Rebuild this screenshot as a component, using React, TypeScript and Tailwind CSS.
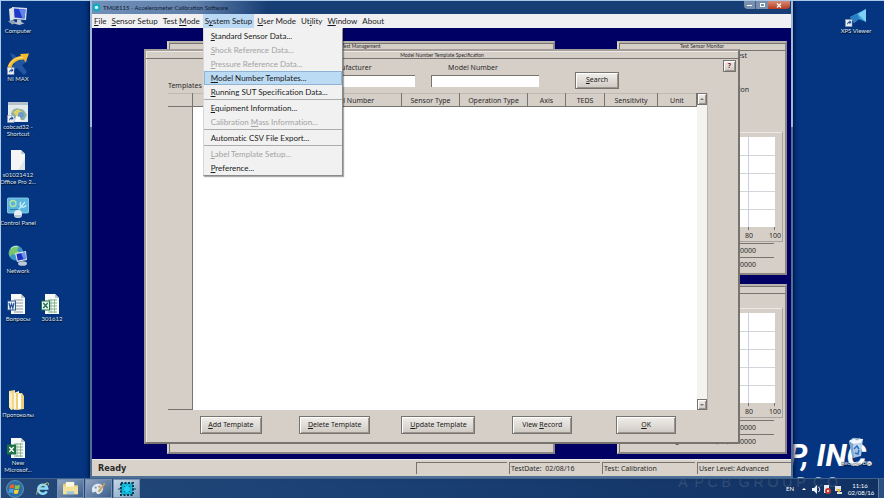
import { ReactNode } from 'react';
import clsx from 'clsx';

type MenuEntry = { label: string; key: number; disabled?: boolean; active?: boolean; divider?: boolean };

const menus = [
  { label: 'File', key: 0 },
  { label: 'Sensor Setup', key: 0 },
  { label: 'Test Mode', key: 5 },
  { label: 'System Setup', key: 1 },
  { label: 'User Mode', key: 0 },
  { label: 'Utility', key: 2 },
  { label: 'Window', key: 0 },
  { label: 'About', key: -1 },
];

const systemSetup: MenuEntry[] = [
  { label: 'Standard Sensor Data...', key: 0 },
  { label: 'Shock Reference Data...', key: 0, disabled: true },
  { label: 'Pressure Reference Data...', key: 0, disabled: true },
  { label: 'Model Number Templates...', key: 0, active: true },
  { label: 'Running SUT Specification Data...', key: 0 },
  { label: 'Equipment Information...', key: 0, divider: true },
  { label: 'Calibration Mass Information...', key: 12, disabled: true },
  { label: 'Automatic CSV File Export...', key: -1, divider: true },
  { label: 'Label Template Setup...', key: 0, disabled: true, divider: true },
  { label: 'Preference...', key: 0 },
];

const columns = [
  { label: 'Manufacturer', width: 'w-[105px]' },
  { label: 'Model Number', width: 'w-auto' },
  { label: 'Sensor Type', width: 'w-[58px]' },
  { label: 'Operation Type', width: 'w-[68px]' },
  { label: 'Axis', width: 'w-[38px]' },
  { label: 'TEDS', width: 'w-[39px]' },
  { label: 'Sensitivity', width: 'w-[53px]' },
  { label: 'Unit', width: 'w-[39px]' },
];

const actions = [
  { label: 'Add Template', key: 0, width: 'w-[62px]' },
  { label: 'Delete Template', key: 0, width: 'w-[71px]' },
  { label: 'Update Template', key: 0, width: 'w-[74px]' },
  { label: 'View Record', key: 5, width: 'w-[60px]' },
  { label: 'OK', key: 0, width: 'w-[60px]' },
];

const Hotkey = ({ text, at }: { text: string; at: number }) => {
  if (at < 0) return <>{text}</>;
  return (
    <>
      {text.slice(0, at)}
      <u className="underline-offset-1">{text[at]}</u>
      {text.slice(at + 1)}
    </>
  );
};

/* ---------- icons ---------- */

const ComputerIcon = () => (
  <svg viewBox="0 0 22 22" className="size-[22px]">
    <path d="M2 4l5-2 1 12-5 2z" fill="#dce4ea" />
    <path d="M5 2l15 1-1 12-13-1z" fill="#d6dde3" />
    <path d="M7 3.500l11.500 1-1 9-10-1z" fill="#2038c8" />
    <path d="M12 4l6.500.500-1 9-2-.200z" fill="#5f86f0" />
    <path d="M10 14.500l4 .300.500 2.500 3 1-5 1.700-6-1.500 3.500-1.500z" fill="#b9c6d2" />
    <path d="M1 16l5-1 4 3-5 1.500z" fill="#8fa3b7" />
  </svg>
);

const ShortcutArrow = () => (
  <g>
    <rect x="0.500" y="14.500" width="6.500" height="7" fill="#eef2f6" stroke="#8899aa" strokeWidth=".5" />
    <path d="M2 20c0-2.500 1-3.500 2.500-3.600V15l2 2.300-2 2.200V18c-1.300 0-1.800.800-2.500 2z" fill="#214f9c" />
  </g>
);

const NiMaxIcon = () => (
  <svg viewBox="0 0 22 22" className="size-[22px]">
    <path d="M3 0l5 2 4 6 5-5 4 5-6 4 5 7-3 3-7-7-6 4-1-4 5-4z" fill="#2456a0" />
    <path d="M0 17C1 9 6 4 14 3l-1-2 9-.5-3.500 9-1.500-3c-7 0-11 3-13 9z" fill="#f4b92c" />
    <path d="M2 13C4 8 8 5 16 4.300" fill="none" stroke="#fde58c" strokeWidth="1" />
    <ShortcutArrow />
  </svg>
);

const CobcadIcon = () => (
  <svg viewBox="0 0 22 22" className="size-[22px]">
    <rect x="1" y="1" width="20" height="20" fill="#e4e9ec" />
    <rect x="1" y="1" width="20" height="3" fill="#b6c2cb" />
    <path d="M4 13c1-5 5-7 9-5 4 0 5 3 7 6l-3 5H9z" fill="#8fb0a5" />
    <path d="M6 11l5-3 4 3-5 5z" fill="#dcd36a" />
    <circle cx="14" cy="14" r="3" fill="#6b9cc9" />
    <path d="M9 15l4 1 1 4H8z" fill="#fafafa" />
    <ShortcutArrow />
  </svg>
);

const FileIcon = () => (
  <svg viewBox="0 0 22 22" className="size-[22px]">
    <path d="M4 1h10l4 4v16H4z" fill="#f3f5f6" />
    <path d="M14 1v4h4z" fill="#c3cbd1" />
    <path d="M11 21l7-11v11z" fill="#dde3e7" />
  </svg>
);

const ControlPanelIcon = () => (
  <svg viewBox="0 0 22 22" className="size-[22px]">
    <rect x="0.500" y="1" width="21" height="15" rx="1" fill="#5cb5dc" stroke="#9bd8ee" strokeWidth=".8" />
    <circle cx="6" cy="6.500" r="3" fill="none" stroke="#b5e3a1" strokeWidth="1.300" />
    <path d="M12 12l6-7M14 5a3 3 0 1 0 5 3" stroke="#c5effa" strokeWidth="1.300" fill="none" />
    <path d="M3 12.500h8" stroke="#2f7fb2" />
    <circle cx="11" cy="17" r="4" fill="#e8eff4" />
    <path d="M7 18a4 3 0 0 0 8 0z" fill="#b8c8d4" />
  </svg>
);

const NetworkIcon = () => (
  <svg viewBox="0 0 22 22" className="size-[22px]">
    <circle cx="9" cy="8" r="7.500" fill="#3b94c8" />
    <path d="M3 5c2-4 7-4 9-3l-2 3 2 2-4 3-3-1-2 3c-1-3-1-5 0-7z" fill="#7cc66a" />
    <path d="M4 3.500c2-2 5-2.500 7-2" stroke="#d6f2e3" fill="none" />
    <path d="M8 8l11-2 1 9-10 2z" fill="#dbe4ec" />
    <path d="M9.500 9l8.500-1.500.700 6.500-8 1.500z" fill="#1b2fc0" />
    <path d="M14 8.200l4-.700.700 6.500-2 .400z" fill="#6b93ee" />
    <ellipse cx="15.500" cy="18.500" rx="4.500" ry="2.300" fill="#bccad6" />
  </svg>
);

const OfficeIcon = ({ kind }: { kind: 'word' | 'excel' | 'excelNew' }) => {
  const color = kind === 'word' ? '#2b5797' : '#1e7145';
  return (
    <svg viewBox="0 0 22 22" className="size-[22px]">
      <path d="M4 1h10l4 4v16H4z" fill="#f7f9f8" />
      <path d="M14 1v4h4z" fill="#bcc7c4" />
      <path d="M7 7h9M7 10h9M7 13h9M7 16h9M7 19h9" stroke={kind === 'word' ? '#8d9aa8' : '#7fb28c'} strokeWidth="1" />
      {kind !== 'word' && <path d="M10 6v14M13.500 6v14" stroke="#7fb28c" strokeWidth=".8" />}
      <rect x="0.500" y="8" width="8" height="9" fill={kind === 'excelNew' ? color : '#eef3f8'} stroke={color} />
      <path
        d={kind === 'word' ? 'M2 10l1.200 5 1.300-4 1.300 4L7 10' : 'M2.300 10l4.400 5M6.700 10l-4.400 5'}
        fill="none"
        stroke={kind === 'excelNew' ? '#fff' : color}
        strokeWidth="1.300"
      />
    </svg>
  );
};

const FolderIcon = () => (
  <svg viewBox="0 0 22 22" className="size-[22px]">
    <path d="M2 2l6-1v19l-4 1-2-3z" fill="#f2d98a" />
    <path d="M7 4l5-2v18l-5 1z" fill="#f8f4e4" />
    <path d="M9 4l6 0 2 3v13l-8 1z" fill="#efcf74" />
    <path d="M11 4.500l3 .500v15l-3 .500z" fill="#fff" />
    <path d="M2 2l3 3v16l-3-3z" fill="#fbeeb9" />
  </svg>
);

const XpsIcon = () => (
  <svg viewBox="0 0 22 22" className="size-[22px]">
    <path d="M5 12l16-8v13l-7-3-5 4z" fill="#3ea6df" />
    <path d="M21 4l-8 5 8 8z" fill="#7fd2f3" />
    <path d="M5 12l8-3 1 5-5 4z" fill="#2b7dc2" />
    <ShortcutArrow />
  </svg>
);

const RecycleIcon = () => (
  <svg viewBox="0 0 22 22" className="size-[22px]">
    <path d="M4 4l14-2-2 17-8 2z" fill="#b9d5ec" fillOpacity=".9" />
    <path d="M4 4l4-3 10 1-2 4-8 1z" fill="#f2f7fb" />
    <path d="M4 4l4 3 1 14-2-2z" fill="#7fa6cc" />
    <path d="M9 12l3-3 2 3M14 13l-1 4-3-1" stroke="#2c6fc0" strokeWidth="1.500" fill="none" />
    <path d="M6 3l3-2 3 2 3-2" stroke="#8aa7c2" fill="none" />
  </svg>
);

const ChevronIcon = ({ up }: { up?: boolean }) => (
  <svg viewBox="0 0 6 4" className="h-1 w-[6px]">
    <path d={up ? 'M1 3l2-2 2 2z' : 'M1 1l2 2 2-2z'} fill="#77736c" />
  </svg>
);

/* ---------- desktop ---------- */

const shortcuts = [
  { lines: ['Computer'], icon: <ComputerIcon />, cell: 'row-start-1' },
  { lines: ['NI MAX'], icon: <NiMaxIcon />, cell: 'row-start-2' },
  { lines: ['cobcad32 -', 'Shortcut'], icon: <CobcadIcon />, cell: 'row-start-3' },
  { lines: ['s01021412', 'Office Pro 2...'], icon: <FileIcon />, cell: 'row-start-4' },
  { lines: ['Control Panel'], icon: <ControlPanelIcon />, cell: 'row-start-5' },
  { lines: ['Network'], icon: <NetworkIcon />, cell: 'row-start-6' },
  { lines: ['Вопросы'], icon: <OfficeIcon kind="word" />, cell: 'row-start-7' },
  { lines: ['301612'], icon: <OfficeIcon kind="excel" />, cell: 'row-start-7 col-start-2' },
  { lines: ['Протоколы'], icon: <FolderIcon />, cell: 'row-start-9' },
  { lines: ['New', 'Microsof...'], icon: <OfficeIcon kind="excelNew" />, cell: 'row-start-10' },
];

const Shortcut = ({ lines, icon, cell }: { lines: string[]; icon: ReactNode; cell?: string }) => (
  <a
    href="#"
    className={clsx(
      "flex flex-col items-center pt-[4px] font-['Lato','Roboto',sans-serif] text-[6px] leading-[7px] text-[#dfe7f2]",
      cell,
    )}
  >
    {icon}
    <span className="whitespace-nowrap text-center [text-shadow:0_1px_1px_#000]">
      {lines.map((line) => (
        <span key={line} className="block">
          {line}
        </span>
      ))}
    </span>
  </a>
);

/* ---------- application ---------- */

const PushButton = ({ className, children }: { className?: string; children: ReactNode }) => (
  <button
    className={clsx(
      'border border-[#77736e] bg-gradient-to-b from-[#f1efec] to-[#cfc9c2] text-center text-[7px] whitespace-nowrap text-[#1b1b1b] shadow-[inset_1px_1px_0_#fff,inset_-1px_-1px_0_#9a958f]',
      className,
    )}
  >
    {children}
  </button>
);

const Panel = ({ title, className, children }: { title?: string; className: string; children?: ReactNode }) => (
  <section
    className={clsx(
      'absolute flex flex-col border-2 border-[#d6d0c9] border-t-[#b8b3ad] border-r-[#8c8782] border-b-[#8c8782] bg-[#d6cfc8] shadow-[inset_1px_1px_0_#77736e]',
      className,
    )}
  >
    <h2 className="h-[8px] shrink-0 border-b border-[#77736e] text-center font-['Lato',sans-serif] text-[5px] leading-[7px] font-normal">
      {title}
    </h2>
    {children}
  </section>
);

const Plot = () => (
  <div className="mr-[2px] border-r border-b border-[#a8a39d] pb-px shadow-[inset_0_1px_0_#ece8e3]">
    <svg viewBox="0 0 163 99" className="block h-[99px] w-full" preserveAspectRatio="xMaxYMin meet">
      <rect x="10" y="5" width="146" height="90" fill="#fff" />
      <path d="M10 23.500h146M10 41.500h146M10 59.500h146M10 77.500h146" stroke="#d3d3da" />
      <path d="M129.500 5v90" stroke="#ccccee" />
      <path d="M129.500 95v3M155.500 95v3" stroke="#77736e" />
    </svg>
    <div className="flex justify-end gap-[16px] pr-px text-[7px] leading-[9px]">
      <span>80</span>
      <span>100</span>
    </div>
  </div>
);

const Reading = ({ label, value }: { label?: string; value: string }) => (
  <div className="mr-[11px] flex h-[14px] items-start justify-end gap-[2px] text-[7px] leading-[13px]">
    <span>{label}</span>
    <output className="h-[13px] w-[41px] border-t border-[#77736e] pl-px">{value}</output>
  </div>
);

const MenuBar = () => (
  <nav className="relative z-10 flex h-[14px] shrink-0 items-center gap-px bg-[#f0f0f2] font-['Lato','Open_Sans',sans-serif] text-[8px] leading-[12px] font-normal [font-variant-ligatures:none]">
    {menus.map((menu) => {
      const open = menu.label === 'System Setup';
      return (
        <div key={menu.label} className="relative">
          <button
            className={clsx('block h-[14px] px-[2px] whitespace-nowrap text-[#1b1b1b]', open && 'bg-[#b9d9f4]')}
            aria-expanded={open}
          >
            <Hotkey text={menu.label} at={menu.key} />
          </button>
          {open && (
            <div className="absolute top-[14px] left-0 w-[140px] border border-[#8b8b8b] border-t-[#f1f1f1] border-l-[#d8d8d8] bg-[#f1f1f1] shadow-[1px_1px_1px_#00000055]">
              {systemSetup.map((item) => (
                <div key={item.label} className={clsx(item.divider && 'border-t border-[#acacac] pt-px')}>
                  <button
                    disabled={item.disabled}
                    className={clsx(
                      'block h-[14px] w-full border px-[6px] text-left whitespace-nowrap',
                      item.disabled ? 'text-[#a3a3a3]' : 'text-[#1b1b1b]',
                      item.active ? 'border-[#8fb4d3] bg-[#bbdaf3]' : 'border-transparent',
                    )}
                  >
                    <Hotkey text={item.label} at={item.key} />
                  </button>
                </div>
              ))}
            </div>
          )}
        </div>
      );
    })}
  </nav>
);

const SearchField = ({ id, label }: { id: string; label: string }) => (
  <div className="flex w-[108px] flex-col">
    <label htmlFor={id} className="mr-6 pb-[2px] text-center text-[7px] leading-[10px]">
      {label}
    </label>
    <input id={id} className="h-[12px] border-t border-l border-[#77736e] bg-white px-1 text-[7px] outline-none" />
  </div>
);

const TemplateTable = () => (
  <div className="flex min-h-0 flex-1">
    <table className="h-full min-w-0 flex-1 table-fixed border-collapse text-[7px] leading-[9px]">
      <thead>
        <tr className="h-[13px] border-t border-[#c0bab3] bg-[#d6cfc8]">
          <th className="w-[24px] border-r border-b border-[#77736e]" />
          {columns.map((col) => (
            <th key={col.label} className={clsx('border-r border-b border-[#77736e] font-normal', col.width)}>
              {col.label}
            </th>
          ))}
        </tr>
      </thead>
      <tbody>
        <tr>
          <td className="border-r border-b border-[#77736e]" />
          <td colSpan={8} className="bg-white" />
        </tr>
      </tbody>
    </table>
    <div className="flex w-[11px] flex-col justify-between border-r border-[#b8b3ad] bg-[#f4f3f0]">
      <PushButton className="grid h-[12px] w-full place-items-center">
        <ChevronIcon up />
      </PushButton>
      <PushButton className="grid h-[11px] w-full place-items-center">
        <ChevronIcon />
      </PushButton>
    </div>
  </div>
);

const TemplateDialog = () => (
  <div
    role="dialog"
    className="absolute top-[21px] right-[51px] bottom-[15px] left-[52px] flex flex-col border-2 border-[#a39e99] border-r-[#77736e] border-b-[#77736e] bg-[#d6cfc8] shadow-[inset_1px_1px_0_#eeeae6]"
  >
    <h1 className="h-[8px] shrink-0 border-b border-[#77736e] text-center font-['Lato',sans-serif] text-[5px] leading-[8px] font-normal">
      Model Number Template Specification
    </h1>
    <div className="flex justify-end pt-px pr-[2px]">
      <PushButton className="h-[12px] w-[13px] font-bold text-[#8c2020]">?</PushButton>
    </div>
    <div className="-mt-[9px] flex items-start pl-[22px]">
      <span className="w-[139px] pt-[18px] text-[7px] leading-[10px]">Templates</span>
      <div className="flex gap-[16px]">
        <SearchField id="manufacturer" label="Manufacturer" />
        <SearchField id="model" label="Model Number" />
      </div>
      <PushButton className="mt-[9px] ml-[36px] h-[17px] w-[44px]">
        <Hotkey text="Search" at={0} />
      </PushButton>
    </div>
    <div className="mt-[2px] mr-[30px] ml-[22px] flex min-h-0 flex-1">
      <TemplateTable />
    </div>
    <div className="mt-[6px] mr-[40px] mb-[8px] ml-[33px] grid grid-cols-5 justify-items-center">
      {actions.map((action) => (
        <PushButton key={action.label} className={clsx('h-[18px]', action.width)}>
          <Hotkey text={action.label} at={action.key} />
        </PushButton>
      ))}
    </div>
  </div>
);

const StatusBar = () => (
  <footer className="flex h-[17px] shrink-0 items-center gap-[2px] border-t border-[#eeeae6] bg-[#d8d2ca] text-[7px] leading-[11px]">
    <strong className="flex-1 pl-[6px] font-['DejaVu_Sans_Condensed','DejaVu_Sans',sans-serif] text-[9px]">Ready</strong>
    <span className="h-[12px] w-[91px] border-t border-l border-[#77736e]" />
    <span className="h-[12px] w-[91px] border-t border-l border-[#77736e] pl-px">TestDate:&nbsp; 02/08/16</span>
    <span className="h-[12px] w-[93px] border-t border-l border-[#77736e] pl-px">Test: Calibration</span>
    <span className="h-[12px] w-[94px] border-t border-l border-[#77736e] pl-px">User Level: Advanced</span>
  </footer>
);

const AppWindow = () => (
  <main className="absolute top-0 right-[91px] bottom-0 left-[89px] flex flex-col border-x-2 border-b-2 border-[#52709c] bg-[#000064] shadow-[0_0_4px_1px_#00102f] [border-image:linear-gradient(#9fb9d8_127px,#4e6f96_127px)_2]">
    <header className="flex h-[13px] shrink-0 items-center bg-gradient-to-r from-[#718fb7] via-[#5f7fa9] via-15% to-[#173f75] to-25%">
      <svg viewBox="0 0 10 10" className="size-[9px]">
        <path
          d="M5 0l1.500 1.500L9 1 8.500 3.500 10 5 8.500 6.500 9 9l-2.500-.500L5 10 3.500 8.500 1 9l.500-2.500L0 5l1.500-1.500L1 1l2.500.500z"
          fill="#11aac2"
        />
        <circle cx="5" cy="5" r="2" fill="#c8f4fa" />
      </svg>
      <span className="ml-[2px] flex-1 font-['Lato',sans-serif] text-[6px] leading-[8px] text-[#0c1b33]">
        TM08115 - Accelerometer Calibration Software
      </span>
      <div className="mr-px flex self-start overflow-hidden rounded-b-sm text-white">
        <button aria-label="Minimize" className="grid h-[8px] w-[12px] place-items-center border-r border-[#405a7c] bg-[#7890ad]">
          <span className="h-px w-[5px] bg-white" />
        </button>
        <button aria-label="Maximize" className="grid h-[8px] w-[12px] place-items-center bg-[#7890ad]">
          <span className="h-[4px] w-[5px] border border-white" />
        </button>
        <button aria-label="Close" className="grid h-[8px] w-[22px] place-items-center bg-gradient-to-b from-[#d58b76] to-[#b7371d]">
          <svg viewBox="0 0 6 5" className="h-[5px] w-[6px]">
            <path d="M1 .5l4 4M5 .5l-4 4" stroke="#fff" strokeWidth="1.200" />
          </svg>
        </button>
      </div>
    </header>
    <MenuBar />
    <div className="relative min-h-0 flex-1 overflow-hidden">
      <Panel title="Test Management" className="top-[13px] bottom-[5px] left-[75px] w-[388px]" />
      <Panel title="Test Sensor Monitor" className="top-[13px] right-[4px] h-[234px] w-[170px]">
        <div className="mr-[38px] text-right text-[7px] leading-[10px]">Test</div>
        <div className="mt-[24px] mr-[36px] mb-[37px] text-right text-[7px] leading-[10px]">Calibration</div>
        <Plot />
        <div className="mt-px">
          <Reading value="0.0000" />
          <Reading value="0.0000" />
        </div>
      </Panel>
      <Panel className="right-[4px] bottom-[5px] h-[170px] w-[170px]">
        <div className="h-[14px] shrink-0" />
        <Plot />
        <div className="mt-[2px]">
          <Reading value="0.0000" />
          <Reading label="Signal / Noise (dB):" value="0.0000" />
        </div>
      </Panel>
      <TemplateDialog />
    </div>
    <StatusBar />
  </main>
);

/* ---------- taskbar ---------- */

const TaskButton = ({ label, framed, active, children }: { label: string; framed?: boolean; active?: boolean; children: ReactNode }) => (
  <button
    aria-label={label}
    className={clsx(
      'grid h-[19px] w-[27px] place-items-center',
      framed && 'border border-[#7891b3] bg-gradient-to-br',
      framed && (active ? 'from-[#c5d6e6] to-[#7f9fbf]' : 'from-[#8fa4c0] to-[#3d5f8c]'),
    )}
  >
    {children}
  </button>
);

const Taskbar = () => (
  <footer className="relative flex h-[20px] shrink-0 items-center gap-[1px] border-t border-[#3f628c] bg-gradient-to-r from-[#234878] via-[#1d4070]/85 to-[#14305a]/80">
    <TaskButton label="Start">
      <svg viewBox="0 0 18 18" className="size-[18px]">
        <circle cx="9" cy="9" r="8.500" fill="#2b6ea5" stroke="#6fa3c8" strokeWidth=".8" />
        <path d="M4 5c1.500-1 3-1 4.500-.200L7.800 8.500C6.500 7.800 5 7.800 3.300 8.700z" fill="#e8622c" />
        <path d="M9.300 5c1.500.800 3 .800 4.700-.200L13 8.800c-1.500.800-3 .700-4.400 0z" fill="#8cc63e" />
        <path d="M3.200 9.500c1.500-.900 3-.900 4.400-.200L7 13c-1.300-.700-2.800-.700-4.500.200z" fill="#4aa3e0" />
        <path d="M8.400 9.600c1.500.700 3 .700 4.500-.100L12 13.300c-1.500.800-3 .800-4.300 0z" fill="#fbce34" />
      </svg>
    </TaskButton>
    <TaskButton label="Internet Explorer">
      <svg viewBox="0 0 18 18" className="size-[17px]">
        <path d="M13.500 12a4.800 4.800 0 1 1 .500-3H5" fill="none" stroke="#8fdcf8" strokeWidth="2.600" />
        <path d="M3 15.500C2 13 6 6 14 3c2 0 1.500 1.500.700 3" fill="none" stroke="#d9cf7b" strokeWidth="1" />
      </svg>
    </TaskButton>
    <TaskButton label="Explorer" framed>
      <svg viewBox="0 0 18 16" className="h-[15px] w-[17px]">
        <path d="M1 3h6l1 1.500h9V14H1z" fill="#e8cf77" />
        <path d="M4 1h9v8H4z" fill="#fbf7de" />
        <path d="M1 6h16v8H1z" fill="#f3e19a" />
        <path d="M5 11h8v3H5z" fill="#9cc7e0" />
      </svg>
    </TaskButton>
    <TaskButton label="Paint" framed>
      <svg viewBox="0 0 18 16" className="h-[15px] w-[17px]">
        <path d="M2 9c0-4 4-7 8-6s5 5 3 8-5 4-6 2-1-2-3-1-2-1-2-3z" fill="#dfe8ee" />
        <circle cx="6" cy="7" r="1.200" fill="#6f9fcb" />
        <circle cx="10" cy="6" r="1.200" fill="#c98a78" />
        <circle cx="11" cy="9.500" r="1.200" fill="#8fb57c" />
        <path d="M8 11l7-9 1.500 1L10 12z" fill="#c7a25b" />
      </svg>
    </TaskButton>
    <TaskButton label="TM08115" framed active>
      <svg viewBox="0 0 18 16" className="h-[16px] w-[18px]">
        <rect x="3" y="2" width="12" height="12" fill="#10b5d8" stroke="#07394b" strokeWidth="2" strokeDasharray="2 1.500" />
        <path d="M0 8h4M14 8h4M6 5l6 6M12 5l-6 6" stroke="#0b4c62" />
        <circle cx="9" cy="8" r="3" fill="#1ad0ee" />
      </svg>
    </TaskButton>
    <div className="ml-auto flex items-center gap-[5px] font-['Lato',sans-serif] text-[6px] leading-[7px] text-white">
      <span>EN</span>
      <svg viewBox="0 0 44 12" className="h-[12px] w-[44px]">
        <path d="M3 7l2-2 2 2z" fill="#fff" />
        <path d="M13 5h2l3-3v9l-3-3h-2z" fill="#eef3f8" />
        <path d="M19.500 4c1.500 1.500 1.500 3.500 0 5" stroke="#fff" fill="none" />
        <path d="M25 2h5v8h-5z" fill="#e6ebef" />
        <circle cx="29" cy="8" r="3" fill="#c73a2e" />
        <path d="M28 7l2 2M30 7l-2 2" stroke="#fff" strokeWidth=".8" />
        <path d="M36 3h6v5h-6zM38 9h5v2h-5z" fill="#dfe7ee" />
        <path d="M37 6l3 4 2-4z" fill="#e9b93a" />
      </svg>
      <time className="w-[24px] text-center">
        11:16
        <br />
        02/08/16
      </time>
    </div>
    <button aria-label="Show desktop" className="ml-[5px] h-[19px] w-[6px] border-l border-[#5f7ea6] bg-[#2b4f80]" />
  </footer>
);

export default function App() {
  return (
    <div className="relative isolate flex h-screen flex-col overflow-hidden border-t border-l border-[#a9c8e8] bg-[#053480] font-['Noto_Sans','Open_Sans',sans-serif] text-[#2b2b2b]">
      <div className="pointer-events-none absolute right-[9px] bottom-[22px] -z-10 font-['Roboto',sans-serif] text-[31px] leading-[40px] font-bold whitespace-pre text-white italic">
        P, INC.
      </div>
      <div className="pointer-events-none absolute right-[46px] bottom-[8px] -z-10 font-['Liberation_Sans',sans-serif] text-[14px] leading-[16px] whitespace-pre text-[#a8b9d2]">
        {'A  P C B  G R O U P  C O'}
      </div>
      <div className="relative min-h-0 flex-1">
        <div className="grid auto-rows-[48px] grid-cols-[34px_34px] content-start">
          {shortcuts.map((item) => (
            <Shortcut key={item.lines[0]} {...item} />
          ))}
        </div>
        <div className="absolute inset-y-0 right-[10px] flex w-[36px] flex-col justify-between pb-[12px]">
          <Shortcut lines={['XPS Viewer']} icon={<XpsIcon />} />
          <Shortcut lines={['Recycle Bin']} icon={<RecycleIcon />} />
        </div>
        <AppWindow />
      </div>
      <Taskbar />
    </div>
  );
}
